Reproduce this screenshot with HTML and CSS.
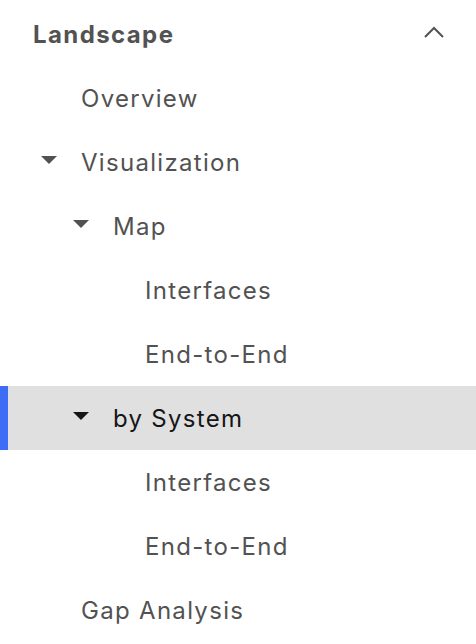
FILE: index.html
```html
<!DOCTYPE html>
<html>
<head>
<meta charset="utf-8">
<link rel="stylesheet" href="styles.css">
</head>
<body>
<nav class="nav">
  <div class="row header">
    <span class="title">Landscape</span>
    <svg class="chev" width="22" height="14" viewBox="0 0 22 14"><path d="M2 11 L11 2 L20 11" fill="none" stroke="#525252" stroke-width="2"/></svg>
  </div>
  <div class="row lvl1"><span class="caret-space"></span><span>Overview</span></div>
  <div class="row lvl1"><span class="caret"></span><span>Visualization</span></div>
  <div class="row lvl2"><span class="caret"></span><span>Map</span></div>
  <div class="row lvl3"><span>Interfaces</span></div>
  <div class="row lvl3"><span>End-to-End</span></div>
  <div class="row lvl2 active"><span class="caret"></span><span>by System</span></div>
  <div class="row lvl3"><span>Interfaces</span></div>
  <div class="row lvl3"><span>End-to-End</span></div>
  <div class="row lvl1"><span class="caret-space"></span><span>Gap Analysis</span></div>
</nav>
</body>
</html>
```
FILE: styles.css
```css
html, body { margin: 0; padding: 0; background: #fff; }
body { font-family: "Inter", "Noto Sans", sans-serif; color: #525252; }
.nav { padding-top: 2px; width: 476px; }
.row {
  height: 64px;
  display: flex;
  align-items: center;
  font-size: 24px;
  letter-spacing: 1.3px;
  box-sizing: border-box;
  border-left: 8px solid transparent;
}
.header { padding-left: 25px; padding-right: 31px; justify-content: space-between; }
.title { font-weight: 700; letter-spacing: 1.4px; }
.chev { display: block; margin-top: -2px; }
.lvl1 { padding-left: 33px; }
.lvl2 { padding-left: 65px; }
.lvl3 { padding-left: 137px; }
.caret, .caret-space { width: 16px; height: 8px; margin-right: 24px; flex: none; }
.caret {
  width: 0; height: 0;
  border-left: 8px solid transparent;
  border-right: 8px solid transparent;
  border-top: 8px solid #525252;
  margin-top: -4px;
}
.active { background: #e0e0e0; border-left-color: #3d6df5; color: #161616; }
.active .caret { border-top-color: #161616; }
```
